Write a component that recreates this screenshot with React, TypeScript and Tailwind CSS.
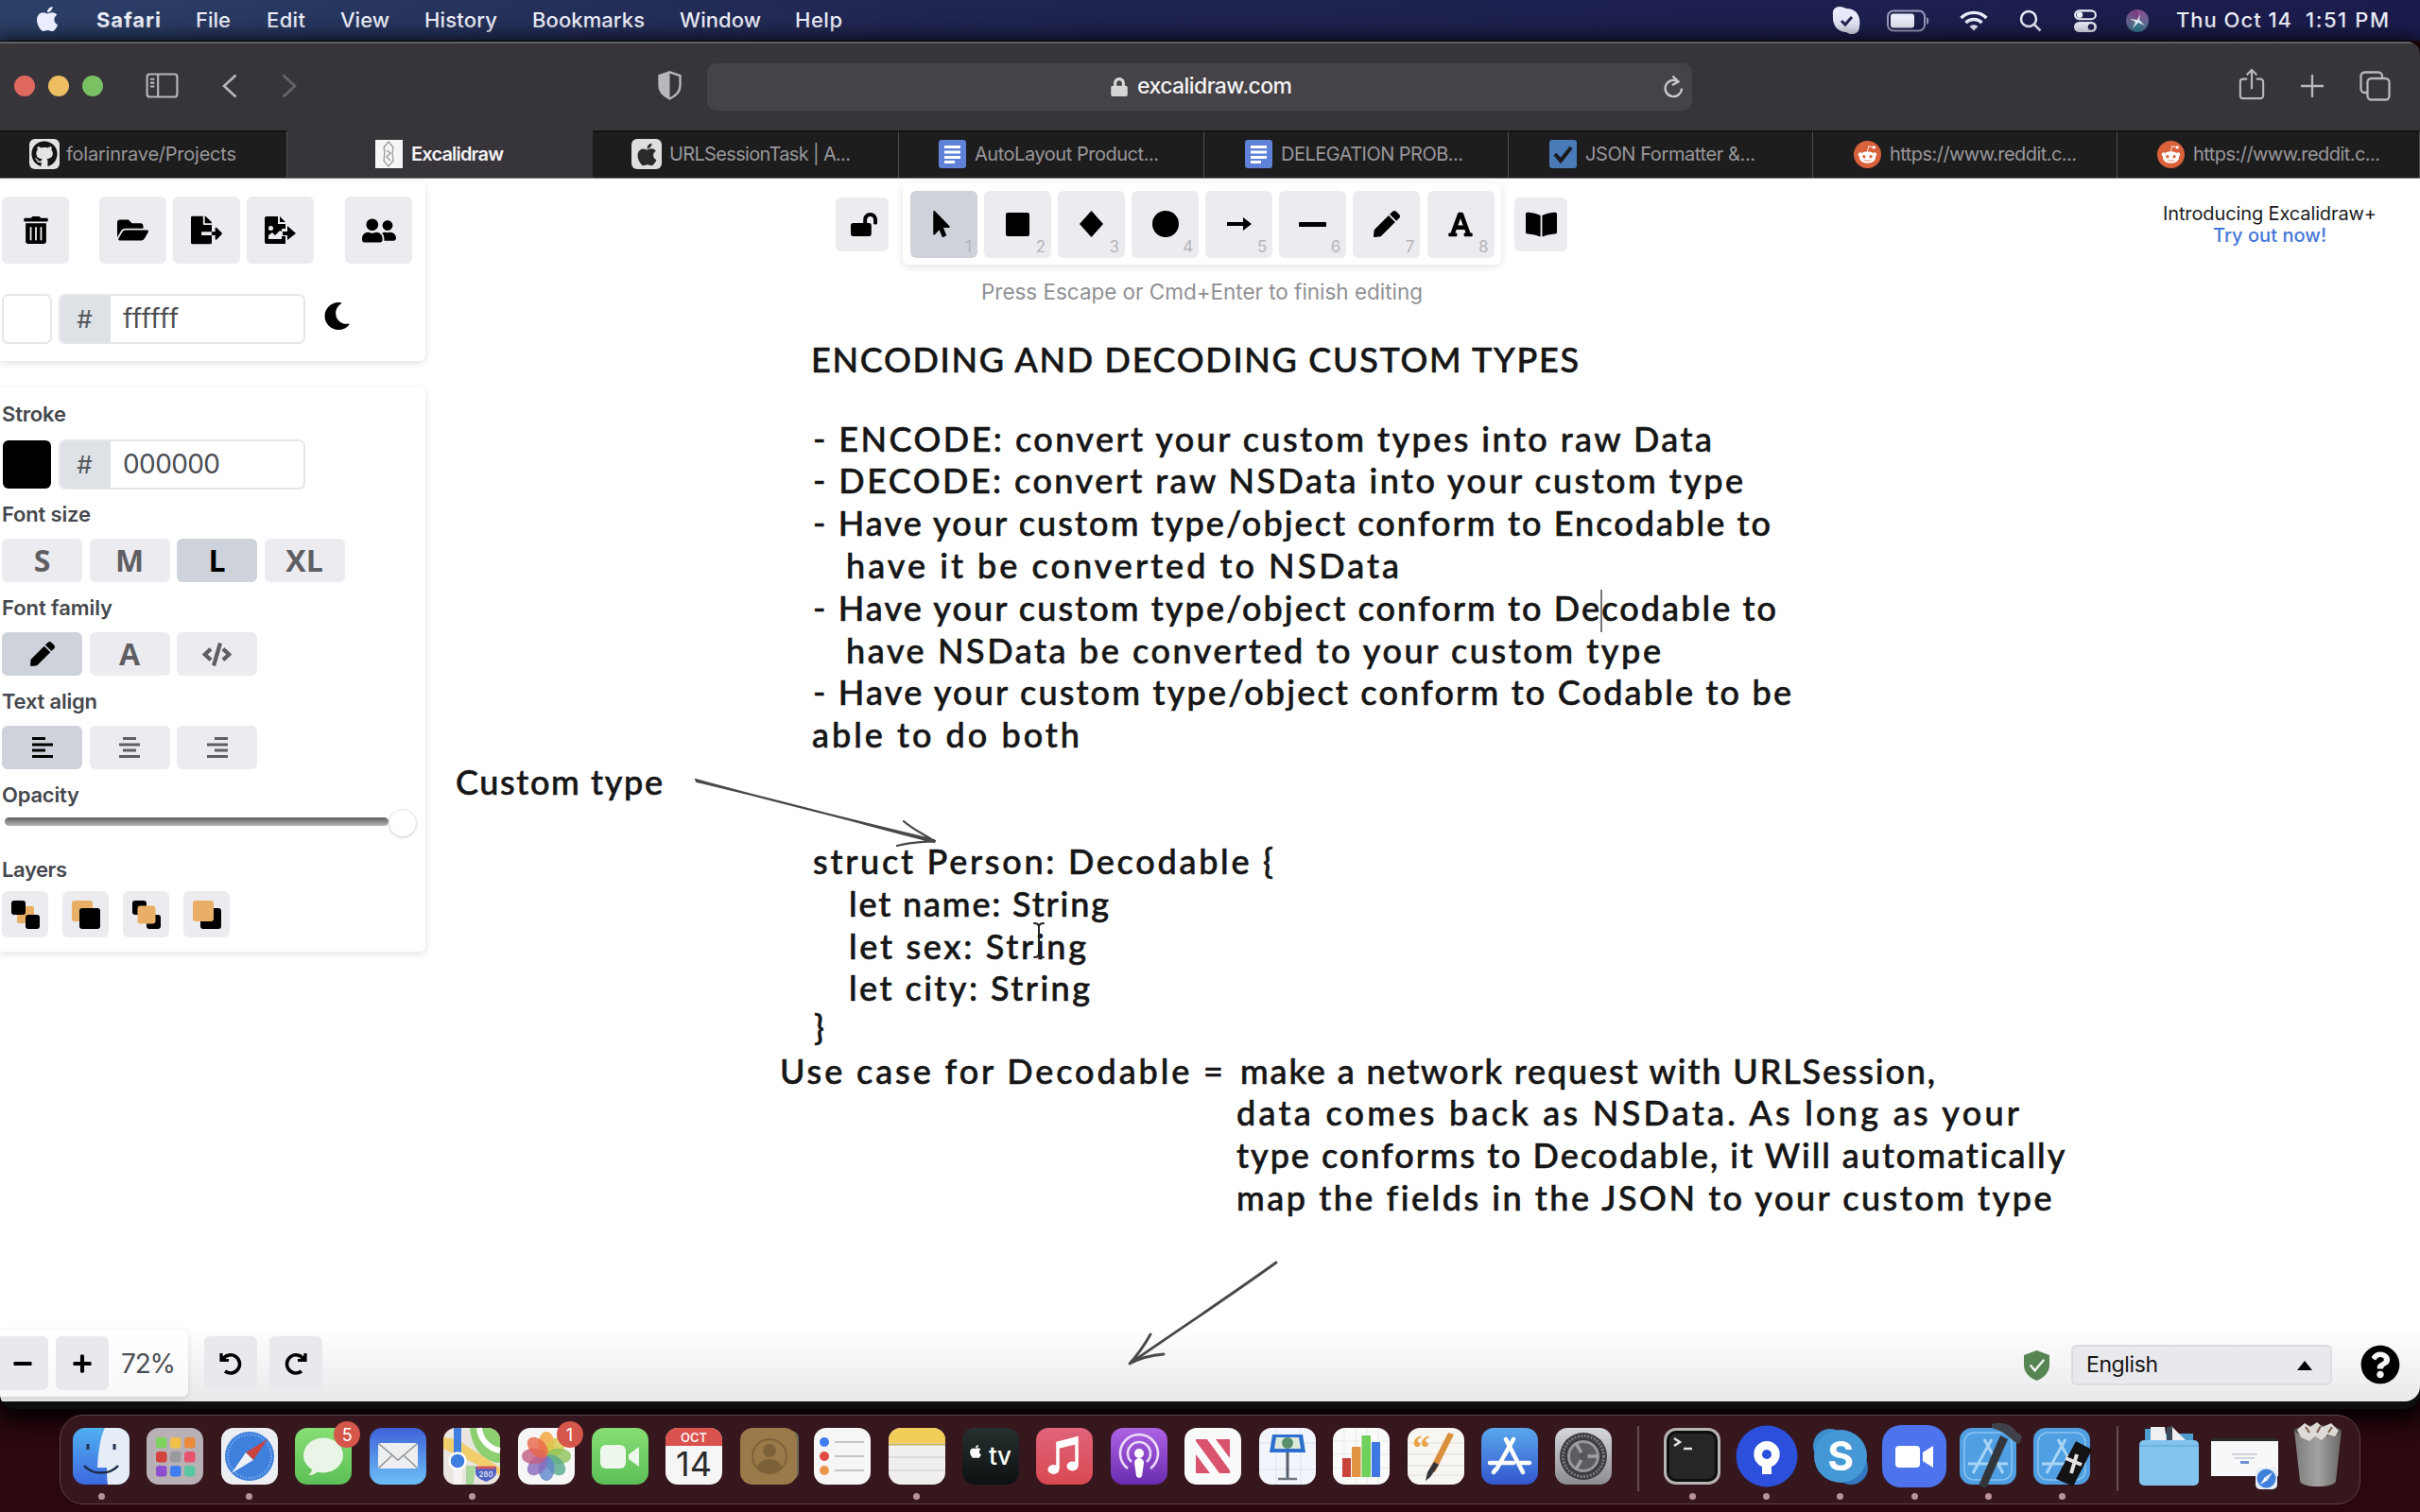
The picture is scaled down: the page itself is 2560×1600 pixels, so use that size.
import { useLayoutEffect, useRef, type ReactNode } from "react";
import {
  FaApple, FaBookOpen, FaCode, FaFileExport, FaFolderOpen, FaFont, FaGithub, FaLock, FaLockOpen,
  FaMinus, FaMoon, FaMousePointer, FaPen, FaPlus, FaQuestionCircle, FaRedditAlien,
  FaTrashAlt, FaUserFriends,
} from "react-icons/fa";

/* Text set to a fixed measure by spreading the difference over its letters. */
function Fit({ w, children, className = "" }: { w: number; children: string; className?: string }) {
  const ref = useRef<HTMLSpanElement>(null);
  useLayoutEffect(() => {
    const el = ref.current;
    if (!el) return;
    el.style.letterSpacing = "0px";
    const natural = el.getBoundingClientRect().width;
    el.style.letterSpacing = `${(w - natural) / Math.max(1, children.length - 1)}px`;
  }, [w, children]);
  return (
    <span className={`block shrink-0 whitespace-pre ${className}`} style={{ width: w }}>
      <span ref={ref} className="inline-block">{children}</span>
    </span>
  );
}

/* ---------- menu bar ---------- */
function MenuBar() {
  return (
    <div className="flex h-[43px] shrink-0 items-center bg-linear-to-r from-[#2c4068] via-[#1f2450] via-40% to-[#1b1c4c] text-[22px] leading-[41px] text-[#eef0fb]">
      <FaApple className="ml-[37px] h-[30px] w-[26px] -translate-y-[2px] text-[#e9edfd]" />
      <Fit w={68} className="ml-[39px] font-bold">Safari</Fit>
      <Fit w={37} className="ml-[37px] font-medium">File</Fit>
      <Fit w={41} className="ml-[38px] font-medium">Edit</Fit>
      <Fit w={52} className="ml-[37px] font-medium">View</Fit>
      <Fit w={77} className="ml-[37px] font-medium">History</Fit>
      <Fit w={119} className="ml-[37px] font-medium">Bookmarks</Fit>
      <Fit w={86} className="ml-[37px] font-medium">Window</Fit>
      <Fit w={50} className="ml-[36px] font-medium">Help</Fit>
      <div className="ml-auto flex items-center pr-[33px]">
        <svg className="h-[30px] w-[30px]" viewBox="0 0 30 30">
          <path d="M8 0C3 0 0 4 1 9c-1 11 5 18 14 18 3 3 14 4 14-6C31 9 25 2 15 2 13 1 11 0 8 0Z" fill="#e9eafc" />
          <path d="m10 15 4 4 7-8" stroke="#22254f" strokeWidth="3" fill="none" />
        </svg>
        <svg className="ml-[28px] h-[24px] w-[45px]" viewBox="0 0 45 24">
          <rect x="1" y="1.500" width="39" height="21" rx="6" fill="none" stroke="#9a9bbb" strokeWidth="2" />
          <rect x="4" y="4.500" width="25" height="15" rx="3" fill="#eceefb" />
          <path d="M42 8v8c3-1 3-7 0-8Z" fill="#9a9bbb" />
        </svg>
        <svg className="ml-[32px] h-[22px] w-[30px]" viewBox="0 0 30 22" fill="none" stroke="#eceefb" strokeWidth="3.400">
          <path d="M1.500 8a19 19 0 0 1 27 0" />
          <path d="M6.500 13a12 12 0 0 1 17 0" />
          <path d="m10.500 17 4.500 4.500 4.500-4.500a6.500 6.500 0 0 0-9 0Z" fill="#eceefb" stroke="none" />
        </svg>
        <svg className="ml-[33px] h-[24px] w-[24px]" viewBox="0 0 24 24" fill="none" stroke="#eceefb" strokeWidth="2.500">
          <circle cx="10" cy="10" r="8" /><path d="m16 16 6.500 6.500" />
        </svg>
        <svg className="ml-[33px] h-[24px] w-[26px]" viewBox="0 0 26 26">
          <rect x="1.200" y="1.500" width="23.600" height="9.500" rx="4.750" fill="none" stroke="#eceefb" strokeWidth="2.200" />
          <circle cx="6.500" cy="6.200" r="3.500" fill="#eceefb" />
          <rect x="0" y="14" width="26" height="12" rx="6" fill="#eceefb" />
          <circle cx="19.500" cy="20" r="3.500" fill="#22254f" />
        </svg>
        <div className="ml-[30px] flex h-[24px] w-[24px] items-center justify-center rounded-full bg-conic from-[#8a4a90] via-[#2f7f98] to-[#7d3a80]">
          <svg viewBox="0 0 24 24" className="h-6 w-6"><path d="m4 10 8 1 3-6-1 6 6 6-7-3-6 6 3-7Z" fill="#e4f2fb" /></svg>
        </div>
        <Fit w={122} className="ml-[29px] font-medium">Thu Oct 14</Fit>
        <Fit w={88} className="ml-[15px] font-medium">1:51 PM</Fit>
      </div>
    </div>
  );
}

/* ---------- browser chrome ---------- */
function BrowserBar() {
  return (
    <div className="flex h-[94px] shrink-0 items-center border-t-2 border-[#626166] bg-[#38353a] pb-[3px] text-[#b9b7bb]">
      <div className="ml-[15px] flex gap-[14px]">
        <div className="size-[22px] rounded-full bg-[#e0695f]" />
        <div className="size-[22px] rounded-full bg-[#edbf62]" />
        <div className="size-[22px] rounded-full bg-[#79c163]" />
      </div>
      <svg className="ml-[45px] h-[27px] w-[35px]" viewBox="0 0 36 28" fill="none" stroke="currentColor" strokeWidth="2.200">
        <rect x="1.500" y="1.500" width="33" height="25" rx="3" />
        <path d="M13.500 1.500v25M5 7h4.500M5 11h4.500M5 15h4.500" />
      </svg>
      <svg className="ml-[46px] h-[26px] w-[16px]" viewBox="0 0 16 26" fill="none" stroke="currentColor" strokeWidth="2.600"><path d="M14.500 1.500 2 13l12.500 11.500" /></svg>
      <svg className="ml-[47px] h-[26px] w-[16px]" viewBox="0 0 16 26" fill="none" stroke="#66646a" strokeWidth="2.600"><path d="M1.500 1.500 14 13 1.500 24.500" /></svg>
      <svg className="ml-[382px] h-[31px] w-[25px]" viewBox="0 0 25 31">
        <path d="M12.500 1.300 23.500 5v11c0 6-4 10-11 13.500C5.500 26 1.500 22 1.500 16V5Z" fill="none" stroke="currentColor" strokeWidth="2.400" />
        <path d="M12.500 1.300V29.500C5.500 26 1.500 22 1.500 16V5Z" fill="currentColor" />
      </svg>
      <div className="ml-[27px] flex h-[50px] w-[1042px] translate-y-px items-center rounded-[10px] bg-[#454347]">
        <FaLock className="ml-[427px] h-[20px] w-[18px] text-[#d6d5d8]" />
        <Fit w={164} className="ml-[10px] text-[23px] leading-[51px] font-medium text-[#f3f2f4]">excalidraw.com</Fit>
        <svg className="mr-[9px] ml-auto h-[25px] w-[21px]" viewBox="0 0 21 25" fill="none" stroke="#c9c8cb" strokeWidth="2.300">
          <path d="M15.500 7.500A8.700 8.700 0 1 0 19 14.500" /><path d="M9.500 1.500 15.500 7.500 9 11" />
        </svg>
      </div>
      <svg className="ml-[578px] h-[34px] w-[28px] -translate-y-[2px]" viewBox="0 0 28 35" fill="none" stroke="currentColor" strokeWidth="2.200">
        <path d="M9 12H4.500a3 3 0 0 0-3 3v15a3 3 0 0 0 3 3h19a3 3 0 0 0 3-3V15a3 3 0 0 0-3-3H19M14 23V2M8.500 7.500 14 2l5.500 5.500" />
      </svg>
      <svg className="ml-[37px] h-[26px] w-[26px]" viewBox="0 0 26 26" stroke="currentColor" strokeWidth="2.300"><path d="M13 1v24M1 13h24" /></svg>
      <svg className="ml-[37px] h-[32px] w-[33px]" viewBox="0 0 33 32" fill="none" stroke="currentColor" strokeWidth="2.300">
        <rect x="8.500" y="8" width="23" height="22.500" rx="4" />
        <path d="M8 23H5.500a4 4 0 0 1-4-4V5.500a4 4 0 0 1 4-4H20a4 4 0 0 1 4 4V8" />
      </svg>
    </div>
  );
}

const docIcon = (
  <svg className="h-[30px] w-[29px]" viewBox="0 0 29 30"><rect width="29" height="30" rx="3" fill="#5f82d8" /><path d="M6 7.500h17M6 13h17M6 18.500h17M6 23.500h11" stroke="#fff" strokeWidth="3" /></svg>
);
const redditIcon = <span className="flex size-[29px] items-center justify-center rounded-full bg-[#d9623c] text-[21px] text-white"><FaRedditAlien /></span>;

function Tab({ w, pad, icon, gap, tw, text, active }: { w: string; pad: string; icon: ReactNode; gap: string; tw: number; text: string; active?: boolean }) {
  return (
    <div className={`flex h-full shrink-0 items-center overflow-hidden ${w} ${pad} ${gap} ${active ? "bg-[#38353a]" : "border-t-2 border-r border-t-[#121213] border-r-[#4e4c50] bg-[#1e1d1e] pb-[2px]"}`}>
      {icon}
      <Fit w={tw} className={`text-[20px] leading-[46px] ${active ? "font-semibold text-[#f4f3f5]" : "text-[#98979a]"}`}>{text}</Fit>
    </div>
  );
}

function Tabs() {
  return (
    <div className="flex h-[51px] shrink-0 border-b border-[#77757a]">
      <Tab w="w-[304px]" pad="pl-[31px]" gap="gap-[7px]" tw={180} text="folarinrave/Projects" icon={<span className="flex size-[32px] items-center justify-center rounded-[6px] bg-[#e4e4e4] text-[28px] text-[#141414]"><FaGithub /></span>} />
      <Tab active w="w-[323px]" pad="pl-[93px]" gap="gap-[9px]" tw={98} text="Excalidraw" icon={
        <svg className="h-[30px] w-[29px]" viewBox="0 0 29 30"><rect width="29" height="30" fill="#f6f6f6" /><path d="m14 2 5 6-1 6 1 8-5 6-5-6 1-9-1-5ZM12 11l4 3-4 4 4 4" fill="none" stroke="#9a9a9a" strokeWidth="1.300" /></svg>
      } />
      <Tab w="w-[324px]" pad="pl-[41px]" gap="gap-[8px]" tw={192} text="URLSessionTask | A..." icon={<span className="flex size-[32px] items-center justify-center rounded-[6px] bg-[#dedede] text-[27px] text-[#2a2a2a]"><FaApple /></span>} />
      <Tab w="w-[323px]" pad="pl-[42px]" gap="gap-[9px]" tw={195} text="AutoLayout Product..." icon={docIcon} />
      <Tab w="w-[322px]" pad="pl-[43px]" gap="gap-[9px]" tw={193} text="DELEGATION PROB..." icon={docIcon} />
      <Tab w="w-[322px]" pad="pl-[43px]" gap="gap-[9px]" tw={180} text="JSON Formatter &..." icon={
        <svg className="h-[30px] w-[29px]" viewBox="0 0 29 30"><rect width="29" height="30" rx="3" fill="#4a7ab8" /><path d="m6 15 6 7L23 8" fill="none" stroke="#191a1c" strokeWidth="4" /></svg>
      } />
      <Tab w="w-[322px]" pad="pl-[43px]" gap="gap-[9px]" tw={198} text="https://www.reddit.c..." icon={redditIcon} />
      <Tab w="w-[320px]" pad="pl-[42px]" gap="gap-[9px]" tw={198} text="https://www.reddit.c..." icon={redditIcon} />
    </div>
  );
}

/* ---------- left panels ---------- */
function Tile({ className = "", children }: { className?: string; children: ReactNode }) {
  return <div className={`flex size-[71px] shrink-0 items-center justify-center rounded-[6px] bg-[#ecebf0] text-black ${className}`}>{children}</div>;
}

function Hex({ value, w }: { value: string; w: number }) {
  return (
    <div className="flex h-[53px] w-[261px] overflow-hidden rounded-[7px] border-2 border-[#e6e6ea] bg-white">
      <div className="flex w-[53px] items-center justify-center bg-[#dee1e6] pr-[2px] text-[26px] text-[#55585c]">#</div>
      <Fit w={w} className="ml-[13px] text-[28px] leading-[49px] text-[#4b4e53]">{value}</Fit>
    </div>
  );
}

function Label({ w, children }: { w: number; children: string }) {
  return <Fit w={w} className="text-[22px] leading-[28px] font-semibold text-[#45484d]">{children}</Fit>;
}

function Option({ on, children }: { on?: boolean; children: ReactNode }) {
  return (
    <div className={`flex h-[46px] w-[85px] items-center justify-center rounded-[6px] font-['Open_Sans'] text-[32px] font-bold ${on ? "bg-[#ced2da] text-black" : "bg-[#ecebf0] text-[#5f5f63]"}`}>{children}</div>
  );
}

function Align({ d }: { d: string }) {
  return <svg className="h-[24px] w-[22px]" viewBox="0 0 22 24" stroke="currentColor" strokeWidth="3"><path d={d} /></svg>;
}

function Layer({ children }: { children: ReactNode }) {
  return <div className="flex size-[49px] items-center justify-center rounded-[6px] bg-[#ecebf0]"><svg className="size-[30px]" viewBox="0 0 30 30">{children}</svg></div>;
}

function LeftPanels() {
  return (
    <div className="w-[450px] shrink-0 pt-[3px]">
      <div className="h-[190px] rounded-r-[6px] bg-white pt-[16px] pl-[2px] shadow-[0_2px_8px_rgba(0,0,0,0.12)]">
        <div className="flex">
          <Tile><FaTrashAlt className="h-[29px] w-[26px]" /></Tile>
          <Tile className="ml-[32px]"><FaFolderOpen className="size-[33px]" /></Tile>
          <Tile className="ml-[7px]"><FaFileExport className="size-[33px]" /></Tile>
          <Tile className="ml-[7px]">
            <svg className="h-[29px] w-[33px]" viewBox="0 0 33 29">
              <path d="M2 0h12v8h8v5h-4v8h4v8H2a2 2 0 0 1-2-2V2a2 2 0 0 1 2-2Z" />
              <path d="M16 0v6h6ZM24 10l9 8-9 7v-5h-5v-4h5Z" />
              <circle cx="6.500" cy="12.500" r="2.500" fill="#ecebf0" />
              <path d="M4 24v-4l4-3 3 3 5-5 2 1v8Z" fill="#ecebf0" />
            </svg>
          </Tile>
          <Tile className="ml-[33px]"><FaUserFriends className="size-[36px]" /></Tile>
        </div>
        <div className="mt-[32px] flex items-center">
          <div className="size-[53px] rounded-[7px] border-2 border-[#e6e6ea] bg-white" />
          <div className="ml-[7px]"><Hex value="ffffff" w={59} /></div>
          <FaMoon className="ml-[19px] size-[29px] -translate-y-[3px] text-black" />
        </div>
      </div>
      <div className="mt-[28px] h-[597px] rounded-r-[6px] bg-white pt-[14px] pl-[2px] shadow-[0_2px_8px_rgba(0,0,0,0.12)]">
        <Label w={68}>Stroke</Label>
        <div className="mt-[13px] flex items-center">
          <div className="ml-px size-[51px] rounded-[6px] bg-black" />
          <div className="ml-[8px]"><Hex value="000000" w={103} /></div>
        </div>
        <div className="mt-[12px]"><Label w={94}>Font size</Label></div>
        <div className="mt-[12px] flex gap-[7.500px]">
          <Option>S</Option><Option>M</Option><Option on>L</Option><Option>XL</Option>
        </div>
        <div className="mt-[13px]"><Label w={117}>Font family</Label></div>
        <div className="mt-[12px] flex gap-[7.500px]">
          <Option on><FaPen className="size-[26px]" /></Option>
          <Option>A</Option>
          <Option><FaCode className="size-[31px]" /></Option>
        </div>
        <div className="mt-[13px]"><Label w={101}>Text align</Label></div>
        <div className="mt-[12px] flex gap-[7.500px]">
          <Option on><Align d="M0 2.500h14M0 9h22M0 15h14M0 21.500h22" /></Option>
          <Option><Align d="M4 2.500h14M0 9h22M4 15h14M0 21.500h22" /></Option>
          <Option><Align d="M8 2.500h14M0 9h22M8 15h14M0 21.500h22" /></Option>
        </div>
        <div className="mt-[13px]"><Label w={82}>Opacity</Label></div>
        <div className="mt-px flex h-[30px] items-center">
          <div className="ml-[3px] h-[9px] w-[406px] -translate-y-0.5 rounded-full bg-linear-to-b from-[#5d5f5f] to-[#b9b9bb]" />
          <div className="size-[30px] rounded-full border border-[#e4e4e6] bg-white shadow-[0_1px_2px_rgba(0,0,0,0.15)]" />
        </div>
        <div className="mt-[20px]"><Label w={69}>Layers</Label></div>
        <div className="mt-[9px] flex gap-[15px]">
          <Layer><rect x="6" y="6" width="18" height="18" rx="2" fill="#e9af66" /><rect width="15" height="15" rx="3" /><rect x="15" y="15" width="15" height="15" rx="3" /></Layer>
          <Layer><rect width="22" height="22" rx="3" fill="#e9af66" /><rect x="8" y="8" width="22" height="22" rx="3" /></Layer>
          <Layer><rect width="15" height="15" rx="3" /><rect x="15" y="15" width="15" height="15" rx="3" /><rect x="5.500" y="5.500" width="19" height="19" rx="3" fill="#e9af66" /></Layer>
          <Layer><rect x="8" y="8" width="22" height="22" rx="3" /><rect width="22" height="22" rx="3" fill="#e9af66" /></Layer>
        </div>
      </div>
    </div>
  );
}

/* ---------- top tools ---------- */
function Tools() {
  const tools: ReactNode[] = [
    <FaMousePointer className="h-[28px] w-[20px]" />,
    <div className="size-[25px] rounded-[2px] bg-black" />,
    <svg className="h-[28px] w-[25px]" viewBox="0 0 25 28"><path d="M12.500 0 25 14 12.500 28 0 14Z" /></svg>,
    <div className="size-[28px] rounded-full bg-black" />,
    <svg className="h-[14px] w-[26px]" viewBox="0 0 26 14"><path d="M0 5h17V0l9 7-9 7V9H0Z" /></svg>,
    <div className="h-[5px] w-[29px] rounded-[1px] bg-black" />,
    <FaPen className="size-[28px]" />,
    <FaFont className="h-[29px] w-[26px]" />,
  ];
  return (
    <div className="ml-[434px] flex w-[774px] shrink-0 flex-col pt-[5px]">
      <div className="flex items-center">
        <div className="flex h-[57px] w-[56px] items-center justify-center rounded-[6px] bg-[#ecebf0]"><FaLockOpen className="ml-[4px] h-[25px] w-[28px]" /></div>
        <div className="ml-[15px] flex h-[86px] w-[634px] items-center gap-[7.100px] rounded-[6px] bg-white pl-[8px] shadow-[0_2px_8px_rgba(0,0,0,0.12)]">
          {tools.map((t, i) => (
            <div key={i} className={`relative flex size-[71px] items-center justify-center rounded-[6px] ${i === 0 ? "bg-[#ced2da] pr-[4px]" : "bg-[#ecebf0]"}`}>
              {t}
              <span className="absolute right-[6px] bottom-[2px] text-[17px] leading-[20px] text-[#b5b5ba]">{i + 1}</span>
            </div>
          ))}
        </div>
        <div className="ml-[14px] flex h-[57px] w-[56px] items-center justify-center rounded-[6px] bg-[#ecebf0]"><FaBookOpen className="size-[33px]" /></div>
      </div>
      <Fit w={467} className="mt-[15px] ml-[154px] text-[22.500px] leading-[28px] text-[#8f9095]">Press Escape or Cmd+Enter to finish editing</Fit>
    </div>
  );
}

/* ---------- canvas ---------- */
type Line = { t: string; l: string; y: string; w: number };
const lines: Line[] = [
  { t: "ENCODING AND DECODING CUSTOM TYPES", l: "left-[858px]", y: "top-[169px]", w: 812 },
  { t: "- ENCODE: convert your custom types into raw Data", l: "left-[860px]", y: "top-[253px]", w: 951 },
  { t: "- DECODE: convert raw NSData into your custom type", l: "left-[860px]", y: "top-[297px]", w: 984 },
  { t: "- Have your custom type/object conform to Encodable to", l: "left-[860px]", y: "top-[342px]", w: 1013 },
  { t: "have it be converted to NSData", l: "left-[895px]", y: "top-[387px]", w: 585 },
  { t: "- Have your custom type/object conform to Decodable to", l: "left-[860px]", y: "top-[432px]", w: 1019 },
  { t: "have NSData be converted to your custom type", l: "left-[895px]", y: "top-[477px]", w: 862 },
  { t: "- Have your custom type/object conform to Codable to be", l: "left-[860px]", y: "top-[521px]", w: 1035 },
  { t: "able to do both", l: "left-[859px]", y: "top-[566px]", w: 283 },
  { t: "Custom type", l: "left-[482px]", y: "top-[616px]", w: 219 },
  { t: "struct Person: Decodable {", l: "left-[860px]", y: "top-[700px]", w: 487 },
  { t: "let name: String", l: "left-[898px]", y: "top-[745px]", w: 275 },
  { t: "let sex: String", l: "left-[898px]", y: "top-[790px]", w: 251 },
  { t: "let city: String", l: "left-[898px]", y: "top-[834px]", w: 255 },
  { t: "}", l: "left-[861px]", y: "top-[876px]", w: 17 },
  { t: "Use case for Decodable =", l: "left-[825px]", y: "top-[922px]", w: 469 },
  { t: "make a network request with URLSession,", l: "left-[1312px]", y: "top-[922px]", w: 735 },
  { t: "data comes back as NSData. As long as your", l: "left-[1308px]", y: "top-[966px]", w: 828 },
  { t: "type conforms to Decodable, it Will automatically", l: "left-[1308px]", y: "top-[1011px]", w: 877 },
  { t: "map the fields in the JSON to your custom type", l: "left-[1308px]", y: "top-[1056px]", w: 862 },
];

function Canvas() {
  return (
    <div className="absolute inset-0">
      {lines.map((x) => (
        <div key={x.y + x.l} className={`absolute ${x.l} ${x.y}`}>
          <Fit w={x.w} className="font-[Lato,sans-serif] text-[36px] leading-[45px] font-medium text-[#161616] [-webkit-text-stroke:0.6px_#161616]">{x.t}</Fit>
        </div>
      ))}
      <div className="absolute top-[435px] left-[1693px] h-[45px] w-[2px] bg-[#77777a]" />
      <svg className="absolute inset-0 h-full w-full" viewBox="0 188 2560 1294" fill="none" stroke="#48484a" strokeWidth="2.300" strokeLinecap="round">
        <path d="M736 824C800 842 880 862 988 888M737 826C820 845 900 867 988 890M956 868C966 877 978 882 988 889M949 894C962 890 976 890 989 889" />
        <path strokeWidth="2.800" d="M1350 1335C1300 1371 1250 1404 1195 1442M1217 1411C1211 1422 1203 1433 1195 1442M1195 1442C1206 1436 1218 1433 1231 1432" />
        <path d="M1094 976q5 0 5 4 0-4 5-4M1099 980v28M1094 1012q5 0 5-4 0 4 5 4" stroke="#222" strokeWidth="2" />
      </svg>
    </div>
  );
}

/* ---------- footer ---------- */
const btn = "flex h-[57px] w-[56px] items-center justify-center rounded-[6px] bg-[#e9e9ed]";
function Turn({ flip }: { flip?: boolean }) {
  return (
    <svg className={`h-[24px] w-[24px] ${flip ? "-scale-x-100" : ""}`} viewBox="0 0 24 24" fill="none" stroke="#000" strokeWidth="3.600">
      <path d="M4 7A9.600 9.600 0 1 1 6 20" /><path d="M2 1v7.500H10" strokeWidth="3.200" /><path d="M1 1v8.500h8.500Z" fill="#000" stroke="none" />
    </svg>
  );
}

function Footer() {
  return (
    <div className="relative mt-auto mb-[5px] flex h-[71px] items-center">
      <div className="flex h-[71px] w-[199px] items-center rounded-r-[6px] bg-white/70 shadow-[0_2px_6px_rgba(0,0,0,0.12)]">
        <div className="flex h-[57px] w-[51px] items-center justify-center rounded-r-[6px] bg-[#e9e9ed]"><FaMinus className="-ml-[3px] size-[22px]" /></div>
        <div className={`${btn} ml-[8px]`}><FaPlus className="size-[22px]" /></div>
        <Fit w={58} className="ml-[13px] text-[28px] text-[#4b4e53]">72%</Fit>
      </div>
      <div className={`${btn} ml-[17px]`}><Turn /></div>
      <div className={`${btn} ml-[13px]`}><Turn flip /></div>
      <svg className="mr-[23px] ml-auto h-[32px] w-[27px] translate-y-[2px]" viewBox="0 0 28 33"><path d="M14 0 28 5v11c0 8-6 14-14 17C6 30 0 24 0 16V5Z" fill="#568452" /><path d="m7 16 5 6 10-12" stroke="#f2f5f2" strokeWidth="2.500" fill="none" /></svg>
      <div className="flex h-[43px] w-[276px] translate-y-[2px] items-center rounded-[6px] border-2 border-[#dcdce1] bg-[#e9e9ed] pr-[19px] pl-[14px]">
        <Fit w={76} className="text-[23px] leading-[39px] text-[#161616]">English</Fit>
        <svg className="ml-auto h-[10px] w-[16px]" viewBox="0 0 16 10"><path d="M8 0 16 10H0Z" /></svg>
      </div>
      <FaQuestionCircle className="mr-[21px] ml-[30px] size-[42px] translate-y-px text-black" />
    </div>
  );
}

/* ---------- dock ---------- */
function App60({ children, bg = "none" }: { children?: ReactNode; bg?: string }) {
  return (
    <svg className="size-[60px] overflow-visible" viewBox="0 0 60 60">
      {bg !== "none" && <rect width="60" height="60" rx="13" fill={bg} />}
      {children}
    </svg>
  );
}
function Slot({ dot, badge, children }: { dot?: boolean; badge?: string; children: ReactNode }) {
  return (
    <div className="relative flex h-full w-[60px] shrink-0 flex-col items-center pt-[13px]">
      {children}
      {dot && <div className="mt-[9px] size-[7px] shrink-0 rounded-full bg-[#b8939c]" />}
      {badge && <div className="absolute top-[6px] -right-[9px] flex size-[28px] items-center justify-center rounded-full bg-[#d5564b] text-[18px] text-white">{badge}</div>}
    </div>
  );
}

const padColors = ["#7ed35c", "#f0c04a", "#e98b3a", "#d4433c", "#9a9a9e", "#e9536f", "#8d4fd0", "#3f7df0", "#59c7a4"];
const petals = ["#f2a33c", "#d9c94c", "#8fc25a", "#5aa98f", "#5f86c9", "#8a6bbd", "#c25f86", "#e8694b"];

function Dock() {
  return (
    <div className="relative mt-[6px] ml-[63px] flex h-[95px] w-[2434px] shrink-0 rounded-[25px] border border-[#5d3f46] bg-[#36171e]">
      <svg className="absolute size-0"><defs>
        <linearGradient id="finder" x2="0" y2="1"><stop stopColor="#4fb0f0" /><stop offset="1" stopColor="#3d68e0" /></linearGradient>
        <linearGradient id="green" x2="0" y2="1"><stop stopColor="#86de74" /><stop offset="1" stopColor="#5cc057" /></linearGradient>
        <linearGradient id="mail" x2="0" y2="1"><stop stopColor="#3f62d8" /><stop offset="1" stopColor="#6bc0f7" /></linearGradient>
        <linearGradient id="blue" x2="0" y2="1"><stop stopColor="#5aa7ec" /><stop offset="1" stopColor="#3357cf" /></linearGradient>
        <linearGradient id="music" x2="0" y2="1"><stop stopColor="#e0637a" /><stop offset="1" stopColor="#d94a51" /></linearGradient>
        <linearGradient id="pod" x2="0" y2="1"><stop stopColor="#ae62e4" /><stop offset="1" stopColor="#6a2cb0" /></linearGradient>
        <linearGradient id="tv" x2="0" y2="1"><stop stopColor="#26302f" /><stop offset="1" stopColor="#0d1112" /></linearGradient>
        <linearGradient id="gray" x2="0" y2="1"><stop stopColor="#d5d7dc" /><stop offset="1" stopColor="#8d8c90" /></linearGradient>
        <linearGradient id="bin" x2="1" y2="0"><stop stopColor="#7d7c7c" /><stop offset=".5" stopColor="#a3a2a1" /><stop offset="1" stopColor="#696767" /></linearGradient>
      </defs></svg>
      <div className="ml-[13px] flex gap-[18.430px]">
        <Slot dot><App60 bg="url(#finder)">
          <path d="M34 0h13a13 13 0 0 1 13 13v34a13 13 0 0 1-13 13H37c-1-6-1-12-1-18H26C27 24 29 10 34 0Z" fill="#e6edf6" />
          <path d="M16 17v6M44 17v6" stroke="#24344f" strokeWidth="3" /><path d="M12 40c9 10 27 10 36 0" fill="none" stroke="#1c2a44" strokeWidth="2.500" />
        </App60></Slot>
        <Slot><App60 bg="#b9b0b6">
          {padColors.map((c, i) => <rect key={c} x={10 + (i % 3) * 15} y={10 + Math.floor(i / 3) * 15} width="11.500" height="11.500" rx="3" fill={c} />)}
        </App60></Slot>
        <Slot dot><App60 bg="#eceef2">
          <circle cx="30" cy="30" r="26" fill="#3f80dd" /><circle cx="30" cy="30" r="23" fill="none" stroke="#8dbcf3" strokeWidth="2" strokeDasharray="1 2" />
          <path d="M49 12 34 34l-8-8Z" fill="#c9433f" /><path d="M11 48 26 26l8 8Z" fill="#eef1f7" />
        </App60></Slot>
        <Slot badge="5"><App60 bg="url(#green)"><ellipse cx="30" cy="29" rx="21" ry="18.500" fill="#eaf5e8" /><path d="M18 42c0 4-1 6-4 8 5 0 9-2 11-5Z" fill="#eaf5e8" /></App60></Slot>
        <Slot><App60 bg="url(#mail)"><rect x="9" y="16" width="42" height="27" rx="3" fill="#eceef0" /><path d="m10 17 20 17 20-17M10 42l14-13M50 42 36 29" fill="none" stroke="#8f9498" strokeWidth="1.500" /></App60></Slot>
        <Slot dot><App60 bg="#e9e6df">
          <path d="M28 0h19a13 13 0 0 1 13 13v24C42 36 30 22 28 0Z" fill="#8ed071" /><path d="M38 0c1 12 10 22 22 24" fill="none" stroke="#fff" strokeWidth="6" />
          <path d="M0 22 60 50v-8L14 12 0 10Z" fill="#f2cf6c" /><path d="M24 40h10l-2 20h-8Z" fill="#a9d79a" />
          <path d="M15 0v32" stroke="#3f7fe0" strokeWidth="8" /><path d="M15 38v22" stroke="#f6f4f2" strokeWidth="9" />
          <circle cx="15" cy="35" r="8.500" fill="#3f7fe0" stroke="#fff" strokeWidth="2.500" />
          <path d="M34 41h22v6c0 5-6 8-11 10-5-2-11-5-11-10Z" fill="#4f63c4" /><path d="M35 42h20" stroke="#cf5560" strokeWidth="3" /><text x="45" y="52" fontSize="8" fill="#fff" textAnchor="middle">280</text>
        </App60></Slot>
        <Slot badge="1"><App60 bg="#f7f6f6">
          {petals.map((c, i) => <ellipse key={c} cx="30" cy="17" rx="8.500" ry="13" fill={c} opacity=".82" transform={`rotate(${i * 45} 30 30)`} />)}
        </App60></Slot>
        <Slot><App60 bg="url(#green)"><rect x="9" y="18" width="27" height="25" rx="6" fill="#eef7ec" /><path d="m39 28 11-8v21l-11-8Z" fill="#eef7ec" /></App60></Slot>
        <Slot><App60 bg="#f7f6f6">
          <path d="M0 19V13A13 13 0 0 1 13 0h34a13 13 0 0 1 13 13v6Z" fill="#d9524e" />
          <text x="30" y="15" fontSize="13" fontWeight="600" fill="#fbeeee" textAnchor="middle">OCT</text>
          <text x="30" y="51" fontSize="36" fill="#2b2b2b" textAnchor="middle" textLength="38">14</text>
        </App60></Slot>
        <Slot><App60>
          <rect x="40" y="3" width="22" height="52" rx="8" fill="#6d6b55" /><rect width="60" height="60" rx="13" fill="#9b7a4a" /><circle cx="31" cy="30" r="18" fill="none" stroke="#7d6239" strokeWidth="2" />
          <circle cx="31" cy="24" r="7" fill="#7d6239" /><path d="M18 42c2-12 24-12 26 0-7 7-19 7-26 0Z" fill="#7d6239" />
        </App60></Slot>
        <Slot><App60 bg="#f7f6f7">
          <circle cx="11" cy="15" r="5" fill="#3f7cf0" /><circle cx="11" cy="30" r="5" fill="#dd4b42" /><circle cx="11" cy="45" r="5" fill="#e99547" />
          <path d="M22 15h31M22 30h31M22 45h31" stroke="#c4c4c8" strokeWidth="2" />
        </App60></Slot>
        <Slot dot><App60 bg="#f0efed"><path d="M0 16v-3A13 13 0 0 1 13 0h34a13 13 0 0 1 13 13v3Z" fill="#f3cd5a" /><path d="M0 17.500h60" stroke="#c9b45a" strokeWidth="2" /><path d="M0 31h60M0 45h60" stroke="#d9d8d6" strokeWidth="1.500" /></App60></Slot>
        <Slot><App60 bg="url(#tv)"><FaApple x="6" y="17" width="22" height="24" color="#fff" /><text x="28" y="39" fontSize="26" fontWeight="500" fill="#fff" textLength="24">tv</text></App60></Slot>
        <Slot><App60 bg="url(#music)"><path d="M23 43V16l20-5v29" fill="none" stroke="#fff" strokeWidth="3.500" /><path d="M23 15l21-5v7l-21 5Z" fill="#fff" /><ellipse cx="18.500" cy="44" rx="6" ry="5" fill="#fff" /><ellipse cx="38.500" cy="40.500" rx="6" ry="5" fill="#fff" /></App60></Slot>
        <Slot><App60 bg="url(#pod)">
          <circle cx="30" cy="27" r="5" fill="#fff" /><path d="M25 37a5 5 0 0 1 10 0l-2 14q-3 4-6 0Z" fill="#fff" />
          <path d="M18 43A20 20 0 1 1 42 43" fill="none" stroke="#eadcf7" strokeWidth="2.600" /><path d="M22 36a12 12 0 1 1 16 0" fill="none" stroke="#eadcf7" strokeWidth="2.600" />
        </App60></Slot>
        <Slot><App60 bg="#fbfafa"><path d="M12 12h12l24 33v3H37L12 14Z" fill="#d9536c" /><path d="M33 12h15v20Z" fill="#d9536c" /><path d="M12 28v20h15Z" fill="#d9536c" /></App60></Slot>
        <Slot><App60 bg="#f2f5fb">
          <path d="M18 0v60M44 0v60M0 16h60M0 44h60" stroke="#dde3ee" /><path d="M30 24v29" stroke="#55606e" strokeWidth="3" /><path d="M20 54h20" stroke="#6d7580" strokeWidth="2.500" />
          <path d="M14 7h32l3 19H11Z" fill="#2d6fd0" /><path d="M18 10h24l2 12H16Z" fill="#dfe9da" /><circle cx="30" cy="16" r="6" fill="#5a8f6c" />
        </App60></Slot>
        <Slot><App60 bg="#fafafa">
          <path d="M12 0v60M24 0v60M36 0v60M48 0v60M0 14h60M0 28h60M0 42h60" stroke="#e2ece2" />
          <rect x="10" y="32" width="9" height="20" fill="#c9433c" /><rect x="20" y="20" width="9.500" height="32" fill="#e29344" /><rect x="30.500" y="8" width="9.500" height="44" fill="#6fd05b" /><rect x="41" y="15" width="9" height="37" fill="#3f78e2" />
        </App60></Slot>
        <Slot><App60 bg="#f8f6f2">
          <path d="M0 16h60M0 28h60M0 40h60M0 50h60" stroke="#e3dfd8" /><text x="5" y="34" fontSize="38" fontWeight="700" fontFamily="Liberation Serif" fill="#e9a445">“</text>
          <path d="m43 5 6 2-20 40-6-3Z" fill="#d98f3d" /><path d="m28 36 5 3-9 13-5 4 2-9Z" fill="#33343a" />
        </App60></Slot>
        <Slot><App60 bg="url(#blue)"><path d="M34 12 16 44M26 12l18 35M9 37h25M40 37h11M13 47l2-3" stroke="#fff" strokeWidth="4.500" strokeLinecap="round" /></App60></Slot>
        <Slot><App60 bg="url(#gray)">
          <circle cx="30" cy="30" r="25" fill="#3b3c3f" /><circle cx="30" cy="30" r="21.500" fill="none" stroke="#7a7b7e" strokeWidth="3" strokeDasharray="2 1.500" /><circle cx="30" cy="30" r="15.500" fill="#5c5d60" stroke="#97989b" strokeWidth="3" />
          <path d="M30 30h16M30 30l-8-14M30 30l-8 14" stroke="#a0a1a4" strokeWidth="3.500" /><circle cx="30" cy="30" r="4.500" fill="#55565a" />
        </App60></Slot>
      </div>
      <div className="mt-[11px] ml-[27px] h-[69px] w-[2px] bg-[#664a52]" />
      <div className="ml-[26px] flex gap-[18.200px]">
        <Slot dot><App60 bg="#b6b4b4"><rect x="3" y="3" width="54" height="54" rx="10" fill="#0d0d0e" /><rect x="6" y="6" width="48" height="48" rx="7" fill="#262628" /><path d="m11 11 6 4-6 4M21 22h9" stroke="#e2e2e2" strokeWidth="2.500" fill="none" /></App60></Slot>
        <Slot dot><App60><circle cx="30" cy="30" r="32.500" fill="#2c50dc" /><path d="M30 14a14 14 0 0 1 5 27v8H25v-8a14 14 0 0 1 5-27Z" fill="#fff" /><circle cx="30" cy="28" r="5" fill="#2c50dc" /></App60></Slot>
        <Slot dot><App60><circle cx="19" cy="19" r="18" fill="#3c8ecb" /><circle cx="41" cy="42" r="18" fill="#3277c0" /><circle cx="30" cy="30" r="28" fill="#4598d6" /><text x="30" y="45" fontSize="42" fontWeight="700" fill="#fff" textAnchor="middle">S</text></App60></Slot>
        <Slot dot><App60><rect x="-4" y="-3" width="68" height="66" rx="20" fill="#4d74ec" /><rect x="10" y="19" width="26" height="23" rx="4" fill="#fff" /><path d="m39 26 11-7v23l-11-7Z" fill="#fff" /></App60></Slot>
        <Slot dot><App60 bg="#4f9fe2">
          <rect x="5" y="5" width="50" height="50" rx="10" fill="none" stroke="#8cc4f2" strokeWidth="1.500" /><path d="M34 12 14 48M26 12l20 36M9 38h42" stroke="#a8d5f7" strokeWidth="3" />
          <path d="M43 8 20 61l8 3L51 12Z" fill="#33363d" /><path d="M34-4c10-3 20 0 26 8l6 5-3 8-6-3c-7-7-13-11-23-14Z" fill="#3f4249" />
        </App60></Slot>
        <Slot dot><App60 bg="#4f9fe2">
          <rect x="5" y="5" width="50" height="50" rx="10" fill="none" stroke="#8cc4f2" strokeWidth="1.500" /><path d="M34 12 14 48M26 12l20 36M9 38h36" stroke="#a8d5f7" strokeWidth="3" />
          <path d="m45 14 17 9-20 39-18-8Z" fill="#131315" /><path d="m34 32 17 7M46 28l-6 20" stroke="#e2e2e4" strokeWidth="4" />
        </App60></Slot>
      </div>
      <div className="mt-[11px] ml-[28px] h-[69px] w-[2px] bg-[#664a52]" />
      <svg className="mt-[11px] ml-[22px] h-[64px] w-[63px]" viewBox="0 0 63 64">
        <path d="M6 8V3h14v5h37v20H6Z" fill="#4d9fd0" /><path d="M12 1h15l2 14H12ZM34 0l16 16H33Z" fill="#eef0f2" /><path d="M29 1h6v14h-6Z" fill="#3b4b5c" />
        <rect y="15" width="63" height="48" rx="5" fill="#83c4ee" /><path d="M0 21h63" stroke="#6fb3e0" strokeWidth="2" />
      </svg>
      <svg className="mt-[24px] ml-[13px] h-[54px] w-[71px]" viewBox="0 0 71 54">
        <rect width="71" height="40" fill="#f7f8fa" /><path d="M0 1.500h71" stroke="#2a2a2c" strokeWidth="3" /><path d="M22 17h27M25 21h21" stroke="#c4c7cf" strokeWidth="1.500" /><rect x="31" y="24" width="9" height="3" fill="#6f8fd0" />
        <rect x="47" y="31" width="23" height="23" rx="5" fill="#e8edf5" /><circle cx="58.500" cy="42.500" r="10" fill="#3f80dd" /><path d="m65 36-5 8-3-3Z" fill="#e2e8f2" /><path d="m52 49 5-8 3 3Z" fill="#fff" />
      </svg>
      <svg className="mt-[7px] ml-[15px] h-[70px] w-[54px]" viewBox="0 0 54 70">
        <path d="M2 8h50l-6 54c-1 8-37 8-38 0Z" fill="url(#bin)" /><ellipse cx="27" cy="9" rx="25" ry="6" fill="#55504f" />
        <path d="m5 8 8-7 6 4 7-5 6 5 9-4 8 8-4 6-8-2 -6 6-7-4-6 5-9-4Z" fill="#dedad6" /><path d="m14 5 4 6M30 4l-4 7M42 5l-4 6" stroke="#7a5a48" strokeWidth="2" />
      </svg>
    </div>
  );
}

export default function App() {
  return (
    <div className="flex h-[1600px] w-[2560px] flex-col overflow-hidden bg-[#2a080e] font-[Inter,sans-serif] text-black">
      <MenuBar />
      <div className="flex h-[1448px] shrink-0 flex-col overflow-hidden rounded-tr-[14px] rounded-b-[16px] border-t border-black bg-[#0e0d10] shadow-[0_6px_24px_6px_#000]">
        <BrowserBar />
        <Tabs />
        <div className="relative flex h-[1294px] shrink-0 flex-col overflow-hidden rounded-br-[16px] bg-linear-to-b from-white from-94% to-[#e9e8eb]">
          <Canvas />
          <div className="relative flex">
            <LeftPanels />
            <Tools />
            <div className="mt-[26px] mr-[46px] ml-auto flex flex-col items-center text-[20px] leading-[23px]">
              <Fit w={226} className="text-[#202022]">Introducing Excalidraw+</Fit>
              <Fit w={120} className="font-medium text-[#4677d8]">Try out now!</Fit>
            </div>
          </div>
          <Footer />
        </div>
      </div>
      <Dock />
    </div>
  );
}
